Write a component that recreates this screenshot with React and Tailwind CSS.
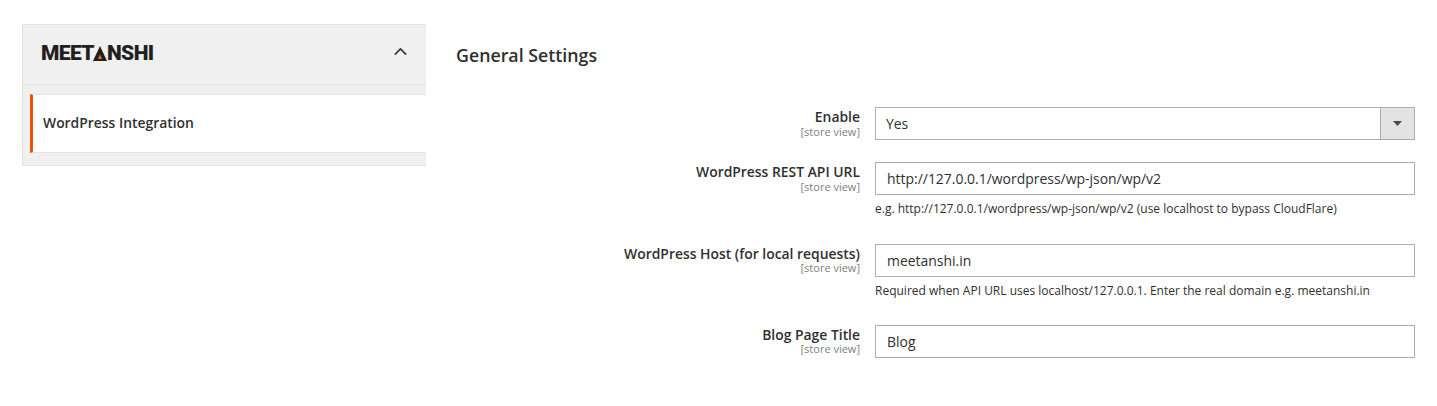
import { ChevronUp } from 'lucide-react';

const font = { fontFamily: '"Open Sans", sans-serif' };

const Logo = () => (
  <div className="flex items-center mt-[-3px] font-['Roboto',sans-serif] font-black text-[21px] leading-none tracking-[-0.6px] text-[#231f20]">
    <span>MEET</span>
    <svg width="14" height="15" viewBox="0 0 14 15" className="mx-[-0.5px]">
      <path d="M7 0 L14 15 H0 Z" fill="#231f20" />
      <path d="M7 8.5 L9 13 H5 Z" fill="#ef6b3a" />
    </svg>
    <span>NSHI</span>
  </div>
);

const Row = ({ label, note, className, subClass = 'leading-[11px]', children }) => (
  <div className={`flex ${className}`}>
    <div className="w-[404px] text-right shrink-0">
      <div className="text-[13.9px] leading-[19px] font-semibold text-[#303030]">{label}</div>
      <div className={`text-[11px] text-[#808080] ${subClass}`}>[store view]</div>
    </div>
    <div className="ml-[15px] w-[540px]">
      {children}
      {note && <div className="mt-[5px] text-[12px] leading-[17px] text-[#303030]">{note}</div>}
    </div>
  </div>
);

const Field = ({ value }) => (
  <div className="h-[33px] border border-[#adadad] bg-white pl-[11px] text-[13.95px] leading-[31px] text-[#303030]">
    {value}
  </div>
);

export default function App() {
  return (
    <div className="w-[1437px] h-[406px] bg-white flex items-start pt-[24px] pl-[22px]" style={font}>
      <div className="w-[404px] shrink-0 border border-[#e3e3e3] border-r-0 bg-[#f0f0f0]">
        <div className="h-[60px] flex items-center justify-between pl-[18px] pr-[15px] border-b border-[#e3e3e3]">
          <Logo />
          <ChevronUp size={21} strokeWidth={1.7} className="text-[#303030] mt-[-6px]" />
        </div>
        <div className="mt-[9px] mb-[12px] ml-[7px] h-[59px] bg-white border-l-[3px] border-[#eb5202] border-y border-y-[#e3e3e3] flex items-center pl-[10px]">
          <span className="text-[13.9px] leading-[19px] mt-[-2px] font-semibold text-[#303030]">WordPress Integration</span>
        </div>
      </div>
      <div className="flex-1 ml-[30px]">
        <h2 className="mt-[19px] text-[17.8px] leading-[24px] font-semibold text-[#303030]">General Settings</h2>
        <div className="mt-[40px] w-[959px]">
          <Row label="Enable">
            <div className="h-[33px] border border-[#adadad] bg-white flex text-[13.95px] leading-[31px] text-[#303030]">
              <div className="flex-1 pl-[10px]">Yes</div>
              <div className="w-[34px] border-l border-[#adadad] bg-[#e3e3e3] flex items-center justify-center">
                <svg width="9" height="5" viewBox="0 0 9 5">
                  <path d="M0 0 H9 L4.5 5 Z" fill="#514943" />
                </svg>
              </div>
            </div>
          </Row>
          <Row
            className="mt-[22px]"
            label="WordPress REST API URL"
            note="e.g. http://127.0.0.1/wordpress/wp-json/wp/v2 (use localhost to bypass CloudFlare)"
          >
            <Field value="http://127.0.0.1/wordpress/wp-json/wp/v2" />
          </Row>
          <Row
            className="mt-[27px]"
            subClass="leading-[9px]"
            label="WordPress Host (for local requests)"
            note="Required when API URL uses localhost/127.0.0.1. Enter the real domain e.g. meetanshi.in"
          >
            <Field value="meetanshi.in" />
          </Row>
          <Row className="mt-[26px]" subClass="leading-[9px]" label="Blog Page Title">
            <Field value="Blog" />
          </Row>
        </div>
      </div>
    </div>
  );
}
